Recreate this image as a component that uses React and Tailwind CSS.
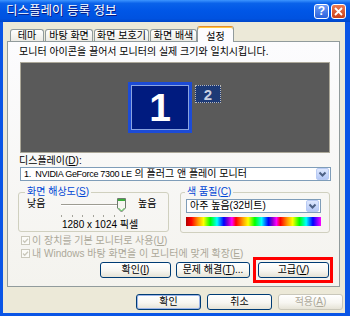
import React from 'react';

function U({ children }) {
  return <span className="underline underline-offset-[1px]">{children}</span>;
}

function Btn({ children, className = '', disabled = false }) {
  return (
    <div
      className={`flex items-center justify-center rounded-[3px] border leading-none bg-[linear-gradient(180deg,#ffffff_0%,#f7f6f1_55%,#e6e3d6_100%)] ${
        disabled ? 'border-[#c9c7ba] text-[#aca899]' : 'border-[#003c74] text-black'
      } ${className}`}
    >
      {children}
    </div>
  );
}

function DropButton() {
  return (
    <div className="flex h-[12px] w-[13px] items-center justify-center rounded-[2px] border border-[#b9cbf3] bg-[linear-gradient(180deg,#dfe8fe,#b4c8f6)]">
      <svg width="9" height="7" viewBox="0 0 9 7">
        <path d="M1.5 1.5 L4.5 4.5 L7.5 1.5" fill="none" stroke="#4d6185" strokeWidth="2" />
      </svg>
    </div>
  );
}

function Select({ children, className = '' }) {
  return (
    <div className={`flex items-center justify-between border border-[#7f9db9] bg-white pl-[3px] pr-px ${className}`}>
      <span className="whitespace-nowrap leading-none">{children}</span>
      <DropButton />
    </div>
  );
}

function Tab({ label, className = '', active = false }) {
  if (active) {
    return (
      <div
        className={`relative z-10 -mb-px flex h-[16px] items-start justify-center rounded-t-[3px] border border-b-0 border-[#919b9c] border-t-[#e68b2c] bg-[#fcfcfe] pt-[2px] shadow-[inset_0_1px_0_#ffc83c] ${className}`}
      >
        {label}
      </div>
    );
  }
  return (
    <div
      className={`flex h-[12px] items-center justify-center rounded-t-[3px] border border-b-0 border-[#919b9c] bg-[linear-gradient(180deg,#ffffff,#ecebe5)] leading-none ${className}`}
    >
      {label}
    </div>
  );
}

function Check({ children }) {
  return (
    <div className="flex h-[13px] items-center text-[#aca899]">
      <svg width="9" height="9" viewBox="0 0 9 9" className="ml-[2px] mr-[2px]">
        <rect x="0.5" y="0.5" width="8" height="8" fill="#fbfbf8" stroke="#cac8bb" />
        <path d="M2 4.5 L3.7 6.2 L7 2.8" fill="none" stroke="#cac8bb" strokeWidth="1.3" />
      </svg>
      <span className="leading-none">{children}</span>
    </div>
  );
}

function Slider() {
  const ticks = [2, 12.5, 23, 33.5, 44, 54.5, 65];
  return (
    <svg width="70" height="21" viewBox="0 0 70 21">
      <line x1="2" y1="6.5" x2="66" y2="6.5" stroke="#9d9c92" />
      <line x1="2" y1="7.5" x2="66" y2="7.5" stroke="#ffffff" />
      {ticks.map((x) => (
        <line key={x} x1={Math.round(x) + 0.5} y1="17" x2={Math.round(x) + 0.5} y2="19" stroke="#a4a39a" />
      ))}
      <path d="M58.5 0.5 H66.5 V10 L62.5 14 L58.5 10 Z" fill="#f6f6f1" stroke="#6f7a6f" />
      <rect x="59" y="1" width="7" height="2" fill="#3aae3a" />
      <path d="M59.5 10 L62.5 13 L65.5 10" fill="none" stroke="#4ec44e" />
    </svg>
  );
}

export default function App() {
  return (
    <div className="flex h-[316px] w-[350px] flex-col bg-[#0a55e6] text-[10px] text-black font-['Liberation_Sans','Noto_Sans_CJK_KR',sans-serif]">
      {/* title bar */}
      <div className="flex h-[22px] shrink-0 items-center bg-[linear-gradient(180deg,#3d95ff_0%,#0a62ea_15%,#0056e6_50%,#0052e0_85%,#0046c8_100%)] pl-[6px] pr-[4px]">
        <span className="flex-1 text-[12.5px] leading-none text-white [text-shadow:1px_1px_#0a1883]">
          디스플레이 등록 정보
        </span>
        <div className="flex gap-[2px]">
          <div className="flex h-[15px] w-[15px] items-center justify-center rounded-[3px] border border-white bg-[linear-gradient(180deg,#6d9cf7,#2a62dc)] text-[12px] font-bold leading-none text-white">
            ?
          </div>
          <div className="flex h-[15px] w-[15px] items-center justify-center rounded-[3px] border border-white bg-[linear-gradient(180deg,#ec7a52,#c8401a)]">
            <svg width="9" height="9" viewBox="0 0 9 9">
              <path d="M1 1 L8 8 M8 1 L1 8" stroke="#ffffff" strokeWidth="1.8" />
            </svg>
          </div>
        </div>
      </div>

      {/* window body */}
      <div className="mb-[3px] ml-[3px] mr-[5px] flex flex-1 flex-col bg-[#ece9d8] pt-[4px]">
        <div className="flex h-[15px] items-end pl-[7px]">
          <Tab label="테마" className="w-[34px]" />
          <Tab label="바탕 화면" className="ml-px w-[48px]" />
          <Tab label="화면 보호기" className="ml-px w-[55px]" />
          <Tab label="화면 배색" className="ml-px w-[47px]" />
          <Tab label="설정" active className="w-[37px]" />
        </div>

        {/* tab panel */}
        <div className="ml-[4px] w-[333px] border border-[#919b9c] bg-[linear-gradient(180deg,#fcfcfe,#f4f3ee)] pb-[8px] pl-[11px] pt-[4px]">
          <div className="leading-[12px]">모니터 아이콘을 끌어서 모니터의 실제 크기와 일치시킵니다.</div>

          <div className="relative ml-px mt-[4px] h-[91px] w-[310px] border border-[#aca899] bg-[#5a5a5a]">
            <div className="absolute left-[107px] top-[19px] h-[51px] w-[64px] bg-[#1c4bd6] p-[3px]">
              <div className="flex h-full items-center justify-center border border-[#8aa4e0] bg-[#001b7f] text-[39px] font-bold leading-none text-white">
                1
              </div>
            </div>
            <div className="absolute left-[174px] top-[22px] flex h-[18px] w-[26px] items-center justify-center border border-dotted border-[#b8b8b8] bg-[#1d3a76] text-[15px] font-bold leading-none text-[#c8d0e0]">
              2
            </div>
          </div>

          <div className="mt-[2px] leading-[12px]">
            디스플레이(<U>D</U>):
          </div>
          <Select className="ml-px h-[14px] w-[311px]">
            <span className="text-[9px] tracking-[-0.3px]">1.&nbsp; NVIDIA GeForce 7300 LE</span> 의 플러그 앤 플레이 모니터
          </Select>

          <div className="-ml-px mt-[5px] flex items-start gap-[11px]">
            <fieldset className="w-[151px] rounded-[3px] border border-[#d0d0bf] pb-[1px]">
              <legend className="ml-[6px] px-[2px] leading-[12px] text-[#0046d5]">
                화면 해상도(<U>S</U>)
              </legend>
              <div className="flex items-start">
                <span className="ml-[8px] mt-px w-[20px] leading-[10px]">낮음</span>
                <div className="ml-[12px]">
                  <Slider />
                </div>
                <span className="ml-[9px] mt-px leading-[10px]">높음</span>
              </div>
              <div className="ml-[43px] leading-[11px]">1280 x 1024 픽셀</div>
            </fieldset>

            <fieldset className="w-[150px] rounded-[3px] border border-[#d0d0bf] pb-[6px]">
              <legend className="ml-[4px] px-[2px] leading-[12px] text-[#0046d5]">
                색 품질(<U>C</U>)
              </legend>
              <Select className="ml-[5px] mt-px h-[14px] w-[135px]">아주 높음(32비트)</Select>
              <div className="ml-[5px] mt-[4px] h-[9px] w-[135px] bg-[linear-gradient(90deg,#b00000_0%,#ff0000_4%,#ff9900_9%,#ffff00_13%,#00ff00_18%,#00ffff_23%,#0000ff_28%,#8800cc_31%,#ff00ff_34%,#ff0000_37%,#ff9900_42%,#ffff00_46%,#00ff00_51%,#00ffff_56%,#0000ff_61%,#8800cc_64%,#ff00ff_67%,#ff0000_70%,#ff9900_75%,#ffff00_79%,#00ff00_84%,#00ffff_89%,#0000ff_94%,#ff00ff_100%)]" />
            </fieldset>
          </div>

          <div className="mt-px">
            <Check>
              이 장치를 기본 모니터로 사용(<U>U</U>)
            </Check>
            <Check>
              내 Windows 바탕 화면을 이 모니터에 맞게 확장(<U>E</U>)
            </Check>
          </div>

          <div className="mr-[10px] mt-[2px] flex justify-end">
            <Btn className="h-[16px] w-[71px]">
              확인(<U>I</U>)
            </Btn>
            <Btn className="ml-[5px] h-[16px] w-[74px]">
              문제 해결(<U>T</U>)...
            </Btn>
            <div className="relative ml-[8px]">
              <Btn className="h-[16px] w-[71px]">
                고급(<U>V</U>)
              </Btn>
              <div className="pointer-events-none absolute -bottom-[5px] -left-[5px] -right-[4px] -top-[5px] border-[3px] border-[#ff0000]" />
            </div>
          </div>
        </div>

        {/* dialog buttons */}
        <div className="mr-[2px] mt-[7px] flex justify-end gap-[6px]">
          <Btn className="h-[16px] w-[65px] shadow-[inset_0_0_0_1px_#9db5e8]">확인</Btn>
          <Btn className="h-[16px] w-[65px]">취소</Btn>
          <Btn disabled className="h-[16px] w-[65px]">
            적용(<U>A</U>)
          </Btn>
        </div>
      </div>
    </div>
  );
}
